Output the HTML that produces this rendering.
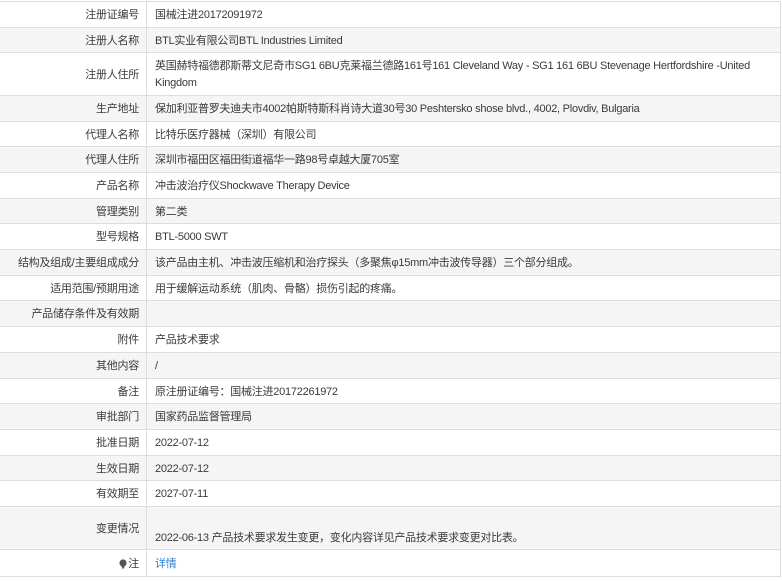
<!DOCTYPE html>
<html><head><meta charset="utf-8"><style>
body{margin:0;background:#fff;font-family:"Liberation Sans","Noto Sans CJK SC",sans-serif;font-size:11px;letter-spacing:-0.25px;color:#3a3a3a;}
.t{position:absolute;left:0;top:1px;width:780px;border-top:1px solid #ddd;border-right:1px solid #ddd;}
.r{display:flex;border-bottom:1px solid #ddd;box-sizing:border-box;}
.r.g{background:#f5f5f5;}
.l{width:147px;box-sizing:border-box;border-right:1px solid #ddd;text-align:right;padding:2px 7px 0 0;display:flex;align-items:center;justify-content:flex-end;white-space:nowrap;line-height:17px;}
.v{flex:1;padding:2px 8px 0;display:flex;align-items:center;line-height:17px;}
a{color:#2a7fd4;text-decoration:none;}
</style></head><body>
<div class="t">
<div class="r" style="height:26px"><div class="l">注册证编号</div><div class="v">国械注进20172091972</div></div>
<div class="r g" style="height:25px"><div class="l">注册人名称</div><div class="v">BTL实业有限公司BTL Industries Limited</div></div>
<div class="r" style="height:43px"><div class="l">注册人住所</div><div class="v">英国赫特福德郡斯蒂文尼奇市SG1 6BU克莱福兰德路161号161 Cleveland Way - SG1 161 6BU Stevenage Hertfordshire -United Kingdom</div></div>
<div class="r g" style="height:26px"><div class="l">生产地址</div><div class="v">保加利亚普罗夫迪夫市4002帕斯特斯科肖诗大道30号30 Peshtersko shose blvd., 4002, Plovdiv, Bulgaria</div></div>
<div class="r" style="height:25px"><div class="l">代理人名称</div><div class="v">比特乐医疗器械（深圳）有限公司</div></div>
<div class="r g" style="height:26px"><div class="l">代理人住所</div><div class="v">深圳市福田区福田街道福华一路98号卓越大厦705室</div></div>
<div class="r" style="height:26px"><div class="l">产品名称</div><div class="v">冲击波治疗仪Shockwave Therapy Device</div></div>
<div class="r g" style="height:25px"><div class="l">管理类别</div><div class="v">第二类</div></div>
<div class="r" style="height:26px"><div class="l">型号规格</div><div class="v">BTL-5000 SWT</div></div>
<div class="r g" style="height:26px"><div class="l">结构及组成/主要组成成分</div><div class="v">该产品由主机、冲击波压缩机和治疗探头（多聚焦φ15mm冲击波传导器）三个部分组成。</div></div>
<div class="r" style="height:25px"><div class="l">适用范围/预期用途</div><div class="v">用于缓解运动系统（肌肉、骨骼）损伤引起的疼痛。</div></div>
<div class="r g" style="height:26px"><div class="l">产品储存条件及有效期</div><div class="v"></div></div>
<div class="r" style="height:26px"><div class="l">附件</div><div class="v">产品技术要求</div></div>
<div class="r g" style="height:26px"><div class="l">其他内容</div><div class="v">/</div></div>
<div class="r" style="height:25px"><div class="l">备注</div><div class="v">原注册证编号：国械注进20172261972</div></div>
<div class="r g" style="height:26px"><div class="l">审批部门</div><div class="v">国家药品监督管理局</div></div>
<div class="r" style="height:26px"><div class="l">批准日期</div><div class="v">2022-07-12</div></div>
<div class="r g" style="height:25px"><div class="l">生效日期</div><div class="v">2022-07-12</div></div>
<div class="r" style="height:26px"><div class="l">有效期至</div><div class="v">2027-07-11</div></div>
<div class="r g" style="height:43px"><div class="l">变更情况</div><div class="v" style="padding-top:20px;box-sizing:border-box">2022-06-13 产品技术要求发生变更，变化内容详见产品技术要求变更对比表。</div></div>
<div class="r" style="height:27px"><div class="l"><svg width="8" height="11" viewBox="0 0 8 11" style="margin-right:1px"><circle cx="4" cy="4" r="3.6" fill="#555"/><path d="M2 6.5 L4 10.5 L6 6.5Z" fill="#555"/></svg>注</div><div class="v"><a>详情</a></div></div>
</div>
</body></html>
